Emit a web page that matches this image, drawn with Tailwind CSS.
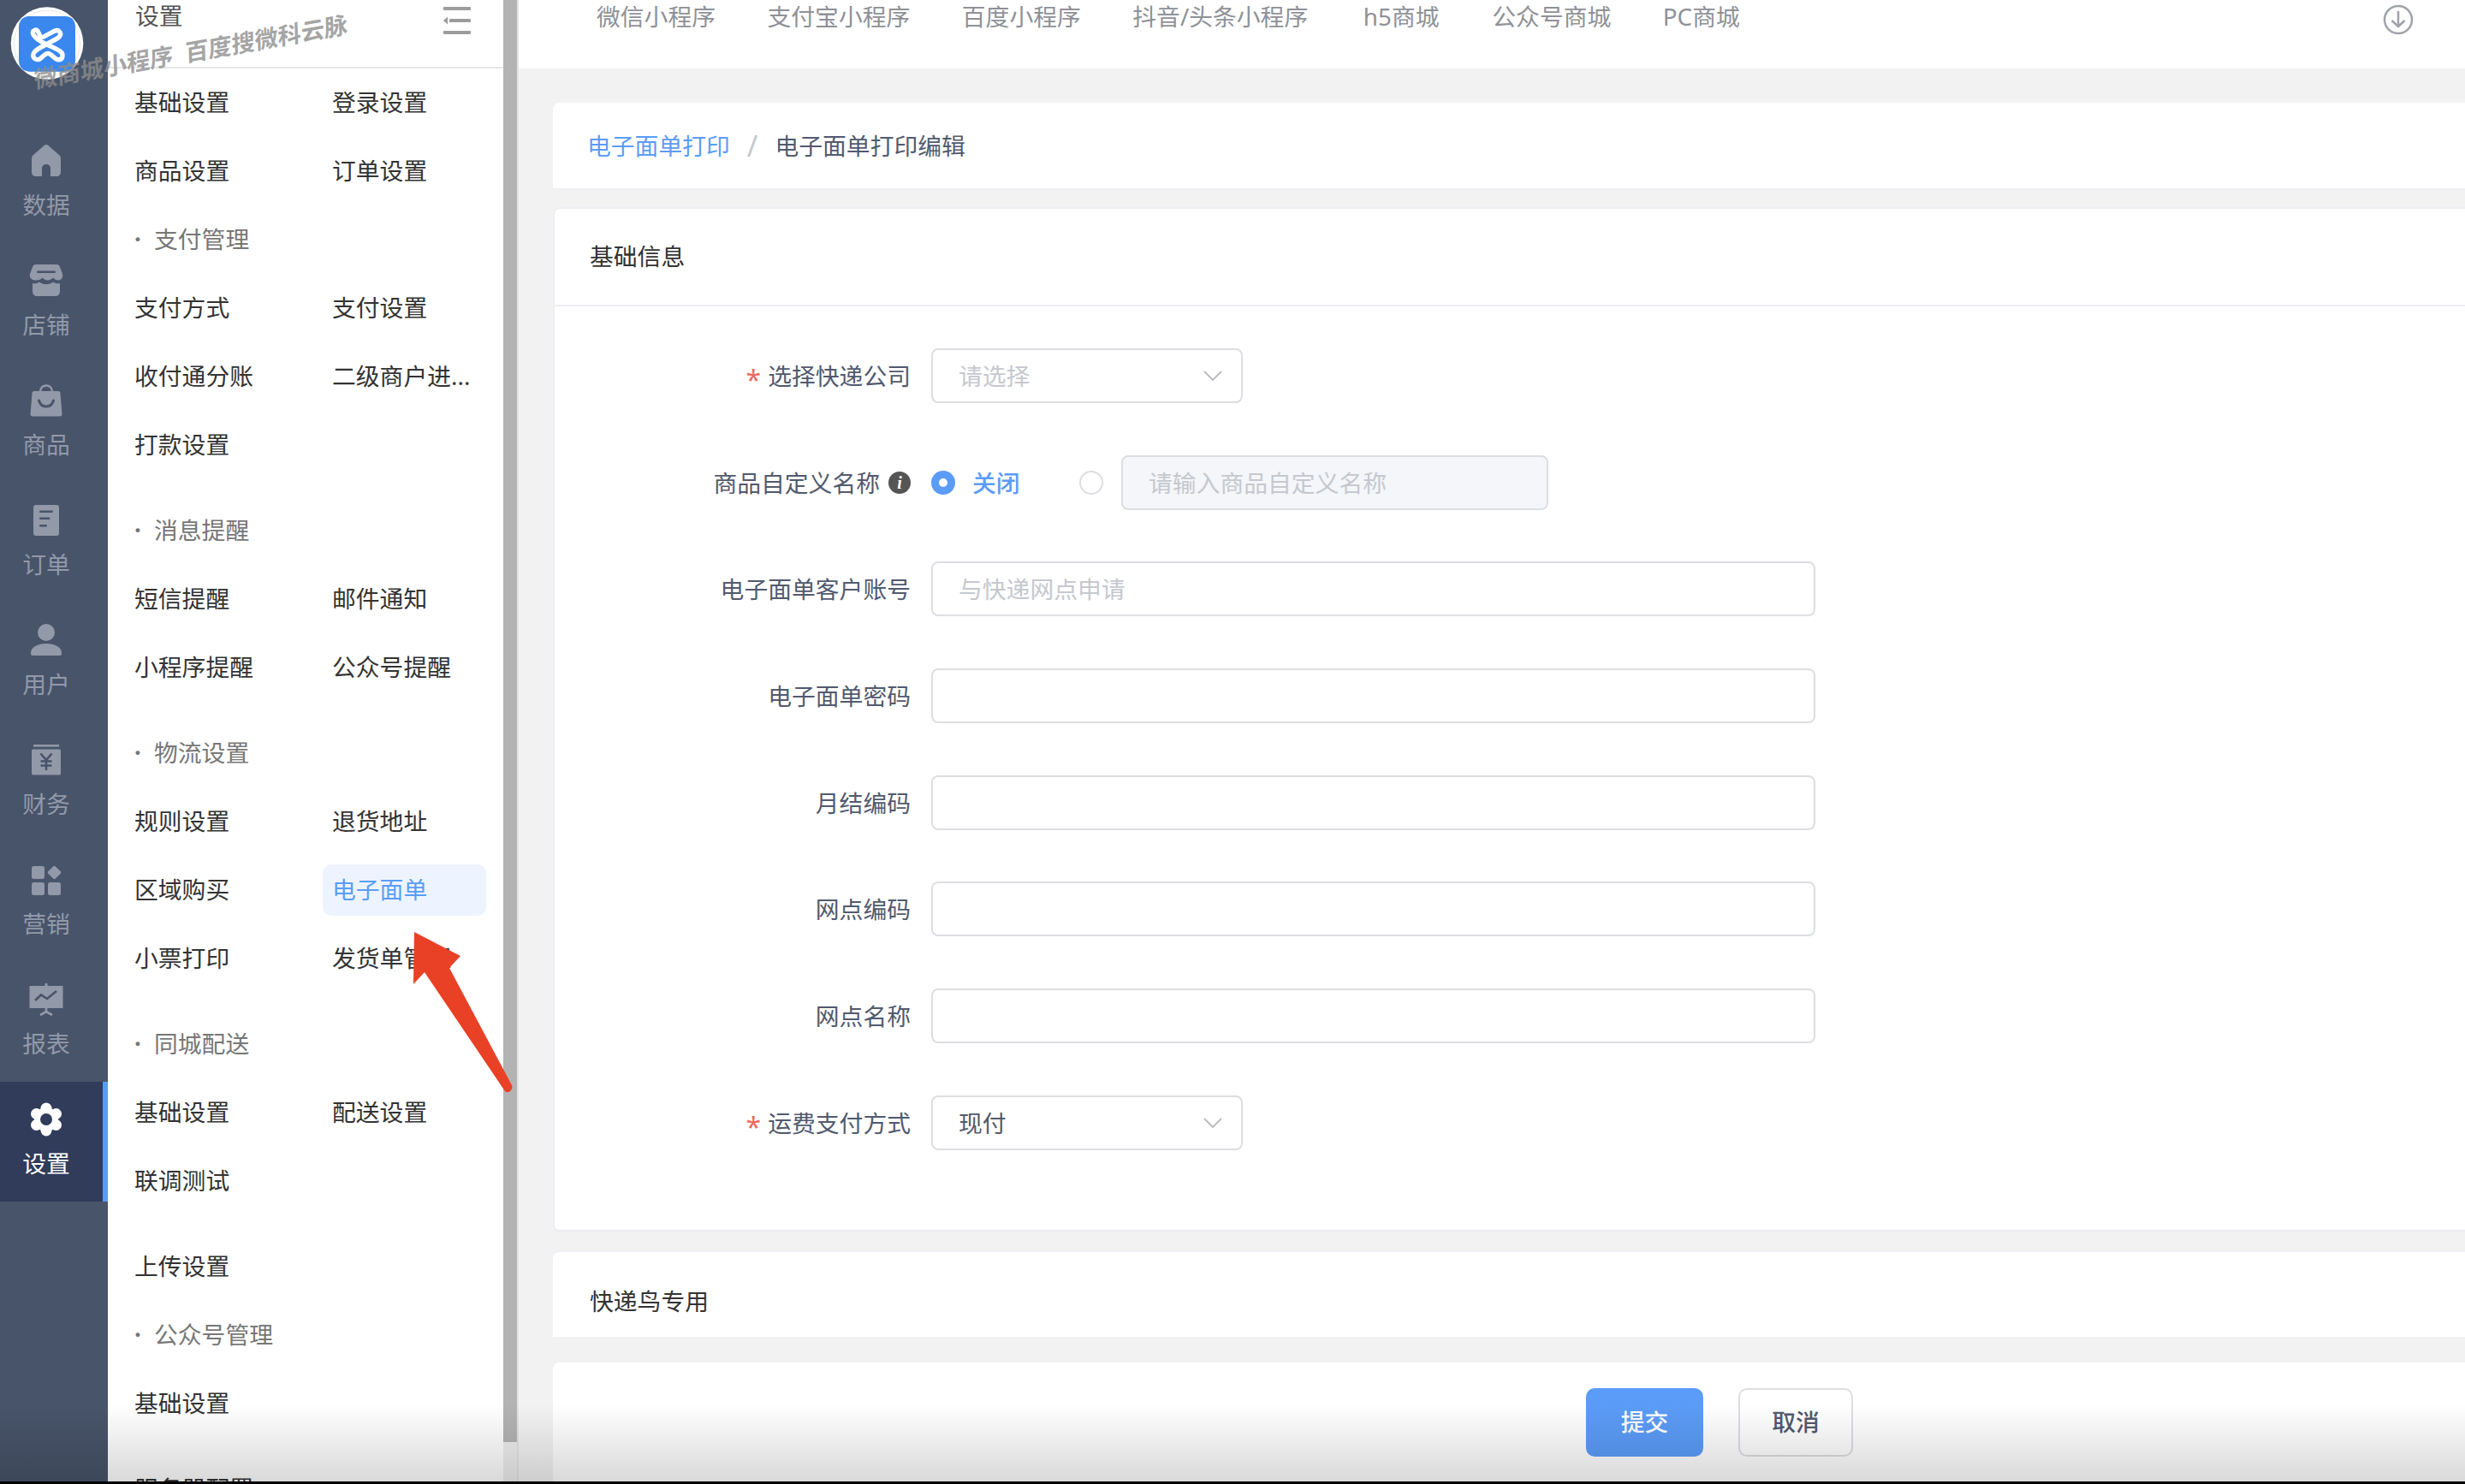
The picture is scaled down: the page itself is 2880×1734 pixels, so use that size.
<!DOCTYPE html>
<html lang="zh-CN">

<head>
    <meta charset="UTF-8">
    <meta name="viewport" content="width=device-width, initial-scale=1.0">
    <script src="https://cdn.jsdelivr.net/npm/@tailwindcss/browser@4"></script>
    <title>电子面单打印编辑</title>
</head>

<body class="font-['Noto_Sans','Noto_Sans_CJK_SC',sans-serif] text-[27.8px] leading-[34px]">
    <div class="relative flex w-[2880px] h-[1734px] overflow-hidden bg-[#f2f2f3]">

        <!-- 左侧主导航 -->
        <nav class="w-[126px] shrink-0 bg-[#48546a] text-[#9299a8]">
            <div class="h-[144px] pl-[10px] pt-[5px]">
                <svg class="w-[90px] h-[90px]" viewBox="0 0 270 270">
                    <circle cx="135" cy="137" r="127" fill="#fff" />
                    <circle cx="135" cy="137" r="116" fill="none" stroke="#d6d9de" stroke-width="2" />
                    <path d="M72 42H198C222 42 234 58 234 80V196C234 220 220 236 196 236H74C50 236 36 220 36 196V80C36 58 50 42 72 42Z" fill="#3a87ee" />
                    <path d="M86 95C96 84 104 92 108 106C112 120 122 116 134 108L160 94C176 86 188 100 178 114C170 122 150 130 126 144C110 152 98 158 90 168C78 184 96 202 112 190C122 182 128 172 138 172C150 172 158 190 172 194C190 196 196 176 180 164C160 150 112 136 96 118C88 108 82 102 86 95Z" fill="none" stroke="#fff" stroke-width="16" stroke-linejoin="round" />
                </svg>
            </div>

            <a class="block h-[140px] w-[108px] pt-[24px] text-center">
                <svg class="mx-auto w-10 h-10" viewBox="0 0 40 40" fill="currentColor"><path d="M20 1C21.200 1 22.200 1.600 23 2.400L35 13C36.500 14.400 37 15.500 37 17.500V33C37 36 35 38 32 38H25V29C25 26 23 24 20 24S15 26 15 29V38H8C5 38 3 36 3 33V17.500C3 15.500 3.500 14.400 5 13L17 2.400C17.800 1.600 18.800 1 20 1Z" /></svg>
                <div class="mt-[14px]">数据</div>
            </a>
            <a class="block h-[140px] w-[108px] pt-[24px] text-center">
                <svg class="mx-auto w-10 h-10" viewBox="0 0 40 40" fill="currentColor"><path d="M8 1H32C34 1 35.500 2 36 4L39 12C40 16 37.500 19.500 34 19.500C31.500 19.500 30 18.500 28 16.500C26 18.500 24 19.500 21.500 19.500C19.500 19.500 17.500 18.500 15.500 16.500C13.500 18.500 11 20 7.500 19.500C3 19.500 0 16 1 12L4 4C4.500 2 6 1 8 1Z" /><path d="M4 23C6 23.500 9 23.500 12 21.500C14 23.500 17.500 24 20 24S26 23.500 28 21.500C31 23.500 34 23.500 36 23V32C36 36 34 38 30 38H10C6 38 4 36 4 32Z" /><rect x="9" y="8.500" width="22" height="2.600" rx="1.300" fill="#48546a" /></svg>
                <div class="mt-[14px]">店铺</div>
            </a>
            <a class="block h-[140px] w-[108px] pt-[24px] text-center">
                <svg class="mx-auto w-10 h-10" viewBox="0 0 40 40" fill="currentColor"><path d="M13 10C13 5 16 2.500 20 2.500S27 5 27 10" fill="none" stroke="currentColor" stroke-width="2.400" /><path d="M6 9H34C35.500 9 36.500 10 36.500 11.500L38.500 36C38.500 37.500 37.500 38.500 36 38.500H4C2.500 38.500 1.500 37.500 1.500 36L3.500 11.500C3.500 10 4.500 9 6 9Z" /><path d="M11.500 20C13 25 16.500 27 20 27S27 25 28.500 20" fill="none" stroke="#48546a" stroke-width="3" stroke-linecap="round" /></svg>
                <div class="mt-[14px]">商品</div>
            </a>
            <a class="block h-[140px] w-[108px] pt-[24px] text-center">
                <svg class="mx-auto w-10 h-10" viewBox="0 0 40 40" fill="currentColor"><rect x="5" y="2" width="30" height="36" rx="3" /><rect x="12" y="8.500" width="16" height="2.600" rx="1.300" fill="#48546a" /><rect x="12" y="16.500" width="12.500" height="2.600" rx="1.300" fill="#48546a" /><rect x="12" y="25" width="9" height="2.600" rx="1.300" fill="#48546a" /></svg>
                <div class="mt-[14px]">订单</div>
            </a>
            <a class="block h-[140px] w-[108px] pt-[24px] text-center">
                <svg class="mx-auto w-10 h-10" viewBox="0 0 40 40" fill="currentColor"><circle cx="20" cy="11" r="10" /><path d="M4 38C2.500 38 2 37 2 35C2 28 10 24 20 24S38 28 38 35C38 37 37.500 38 36 38Z" /></svg>
                <div class="mt-[14px]">用户</div>
            </a>
            <a class="block h-[140px] w-[108px] pt-[24px] text-center">
                <svg class="mx-auto w-10 h-10" viewBox="0 0 40 40" fill="currentColor"><rect x="5" y="2" width="30" height="2.600" /><rect x="3" y="7.500" width="34" height="30" rx="1.500" /><path d="M13.500 12.500L20 20L26.500 12.500M20 20V32M13.500 21.500H26.500M13.500 26.500H26.500" fill="none" stroke="#48546a" stroke-width="2.600" /></svg>
                <div class="mt-[14px]">财务</div>
            </a>
            <a class="block h-[140px] w-[108px] pt-[24px] text-center">
                <svg class="mx-auto w-10 h-10" viewBox="0 0 40 40" fill="currentColor"><rect x="3" y="4" width="15" height="15" rx="2.500" /><rect x="3" y="23" width="15" height="15" rx="2.500" /><rect x="22" y="23" width="15" height="15" rx="2.500" /><rect x="23.500" y="5.500" width="12" height="12" rx="2" transform="rotate(45 29.500 11.500)" /></svg>
                <div class="mt-[14px]">营销</div>
            </a>
            <a class="block h-[140px] w-[108px] pt-[24px] text-center">
                <svg class="mx-auto w-10 h-10" viewBox="0 0 40 40" fill="currentColor"><rect x="18.500" y="1" width="3" height="4" /><rect x="0.500" y="4" width="39" height="26" /><path d="M7 21L14 14.500L21 19L32 10" fill="none" stroke="#48546a" stroke-width="2.600" /><path d="M20 30V33M13 38L20 34L27 38" fill="none" stroke="currentColor" stroke-width="2.600" /></svg>
                <div class="mt-[14px]">报表</div>
            </a>
            <a class="flex h-[140px] bg-[#303c5a] text-white">
                <div class="w-[108px] pt-[24px] text-center">
                    <svg class="mx-auto w-10 h-10" viewBox="0 0 40 40" fill="currentColor"><circle cx="20" cy="20" r="14" /><circle cx="20" cy="7" r="6.500" /><circle cx="20" cy="33" r="6.500" /><circle cx="8.500" cy="13.500" r="6.500" /><circle cx="31.500" cy="13.500" r="6.500" /><circle cx="8.500" cy="26.500" r="6.500" /><circle cx="31.500" cy="26.500" r="6.500" /><circle cx="20" cy="20" r="7" fill="#303c5a" /></svg>
                    <div class="mt-[14px]">设置</div>
                </div>
                <div class="ml-auto w-[6px] bg-[#5b9cf8]"></div>
            </a>
        </nav>

        <!-- 二级菜单 -->
        <aside class="w-[462px] shrink-0 bg-white overflow-hidden text-[#333]">
            <div class="flex justify-between h-[80px] border-b-2 border-[#e6e6e6] pl-[32px] pr-[38px] text-[#555]">
                <span class="mt-[1px]">设置</span>
                <svg class="w-[32px] h-[32px] mt-[8px]" viewBox="0 0 32 32" fill="#9c9c9c">
                    <rect x="0" y="0" width="32" height="4" rx="1" />
                    <rect x="7" y="14" width="25" height="4" rx="1" />
                    <rect x="0" y="28" width="32" height="4" rx="1" />
                    <path d="M5 11.500V20.500L0 16Z" />
                </svg>
            </div>

            <div class="grid grid-cols-[231px_231px] pl-[20px]">
                <a class="h-[60px] my-[10px] w-[191px] px-[11px] leading-[58px]">基础设置</a>
                <a class="h-[60px] my-[10px] w-[191px] px-[11px] leading-[58px]">登录设置</a>
                <a class="h-[60px] my-[10px] w-[191px] px-[11px] leading-[58px]">商品设置</a>
                <a class="h-[60px] my-[10px] w-[191px] px-[11px] leading-[58px]">订单设置</a>
            </div>

            <div class="flex h-[78px] mb-[2px] items-center pl-[31px] text-[#777]"><span class="w-[23px] font-bold">·</span>支付管理</div>
            <div class="grid grid-cols-[231px_231px] pl-[20px]">
                <a class="h-[60px] my-[10px] w-[191px] px-[11px] leading-[58px]">支付方式</a>
                <a class="h-[60px] my-[10px] w-[191px] px-[11px] leading-[58px]">支付设置</a>
                <a class="h-[60px] my-[10px] w-[191px] px-[11px] leading-[58px]">收付通分账</a>
                <a class="h-[60px] my-[10px] w-[191px] px-[11px] leading-[58px] whitespace-nowrap">二级商户进...</a>
                <a class="h-[60px] my-[10px] w-[191px] px-[11px] leading-[58px]">打款设置</a>
            </div>

            <div class="flex h-[78px] mt-[20px] mb-[2px] items-center pl-[31px] text-[#777]"><span class="w-[23px] font-bold">·</span>消息提醒</div>
            <div class="grid grid-cols-[231px_231px] pl-[20px]">
                <a class="h-[60px] my-[10px] w-[191px] px-[11px] leading-[58px]">短信提醒</a>
                <a class="h-[60px] my-[10px] w-[191px] px-[11px] leading-[58px]">邮件通知</a>
                <a class="h-[60px] my-[10px] w-[191px] px-[11px] leading-[58px]">小程序提醒</a>
                <a class="h-[60px] my-[10px] w-[191px] px-[11px] leading-[58px]">公众号提醒</a>
            </div>

            <div class="flex h-[78px] mt-[20px] mb-[2px] items-center pl-[31px] text-[#777]"><span class="w-[23px] font-bold">·</span>物流设置</div>
            <div class="grid grid-cols-[231px_231px] pl-[20px]">
                <a class="h-[60px] my-[10px] w-[191px] px-[11px] leading-[58px]">规则设置</a>
                <a class="h-[60px] my-[10px] w-[191px] px-[11px] leading-[58px]">退货地址</a>
                <a class="h-[60px] my-[10px] w-[191px] px-[11px] leading-[58px]">区域购买</a>
                <a class="h-[60px] my-[10px] w-[191px] px-[11px] leading-[58px] rounded-[10px] bg-[#edf4ff] text-[#5b9cf8]">电子面单</a>
                <a class="h-[60px] my-[10px] w-[191px] px-[11px] leading-[58px]">小票打印</a>
                <a class="h-[60px] my-[10px] w-[191px] px-[11px] leading-[58px]">发货单管理</a>
            </div>

            <div class="flex h-[78px] mt-[20px] mb-[2px] items-center pl-[31px] text-[#777]"><span class="w-[23px] font-bold">·</span>同城配送</div>
            <div class="grid grid-cols-[231px_231px] pl-[20px]">
                <a class="h-[60px] my-[10px] w-[191px] px-[11px] leading-[58px]">基础设置</a>
                <a class="h-[60px] my-[10px] w-[191px] px-[11px] leading-[58px]">配送设置</a>
                <a class="h-[60px] my-[10px] w-[191px] px-[11px] leading-[58px]">联调测试</a>
            </div>

            <div class="grid grid-cols-[231px_231px] pl-[20px] mt-[20px]">
                <a class="h-[60px] my-[10px] w-[191px] px-[11px] leading-[58px]">上传设置</a>
            </div>

            <div class="flex h-[78px] mb-[2px] items-center pl-[31px] text-[#777]"><span class="w-[23px] font-bold">·</span>公众号管理</div>
            <div class="grid grid-cols-[231px_231px] pl-[20px]">
                <a class="h-[60px] my-[10px] w-[191px] px-[11px] leading-[58px]">基础设置</a>
            </div>

            <div class="grid grid-cols-[231px_231px] pl-[20px] mt-[20px]">
                <a class="h-[60px] my-[10px] w-[191px] px-[11px] leading-[58px]">服务器配置</a>
            </div>
        </aside>

        <!-- 滚动条 -->
        <div class="flex flex-col w-[16px] shrink-0 bg-[#eeeeee]">
            <div class="h-[1685px] bg-[#b3b3b3]"></div>
        </div>
        <div class="w-[2px] shrink-0 bg-[#e4e4e4]"></div>

        <!-- 主内容 -->
        <main class="flex-1 min-w-0">
            <div class="flex h-[80px] bg-white pl-[91px] pr-[60px] text-[#8f9197]">
                <div class="flex gap-[60.500px] h-[38px] items-center whitespace-nowrap">
                    <a>微信小程序</a>
                    <a>支付宝小程序</a>
                    <a>百度小程序</a>
                    <a class="w-[209px]">抖音/头条小程序</a>
                    <a class="w-[90px]">h5商城</a>
                    <a>公众号商城</a>
                    <a>PC商城</a>
                </div>
                <svg class="ml-auto mt-[5px] w-[36px] h-[36px]" viewBox="0 0 36 36" fill="none" stroke="#a0a2aa" stroke-width="2.500">
                    <circle cx="18" cy="18" r="16" />
                    <path d="M18 8V26M10.500 19L18 26L25.500 19" />
                </svg>
            </div>

            <div class="flex items-center h-[102px] ml-[40px] mt-[40px] pl-[40px] bg-white border-b-2 border-[#eeeef4] rounded-tl-lg">
                <a class="text-[#5b9cf8]">电子面单打印</a>
                <span class="mx-[20px] text-[34px] text-[#c5c8ce]">/</span>
                <span class="text-[#515a6e]">电子面单打印编辑</span>
            </div>

            <section class="h-[1197px] ml-[40px] mt-[20px] bg-white border-2 border-r-0 border-[#eeeef4] rounded-l-lg">
                <div class="h-[114px] pl-[41px] pt-[38px] border-b-2 border-[#eeeef4] text-[#333]">基础信息</div>

                <form class="pt-[49px] text-[#515a6e]">
                    <div class="flex items-center h-[64px] mb-[60.700px]">
                        <label class="w-[416px] mr-[24px] text-right"><span class="text-[32px] leading-[0] align-[-6px] text-[#ee6a5e] mr-[8px]">*</span>选择快递公司</label>
                        <div class="flex items-center justify-between w-[364px] h-[64px] pl-[30px] pr-[22px] border-2 border-[#dcdee2] rounded-lg text-[#c5c8ce]">
                            请选择
                            <svg class="w-[22px] h-[12px]" viewBox="0 0 22 12" fill="none" stroke="#b8bac0" stroke-width="1.800"><path d="M1 1L11 11L21 1" /></svg>
                        </div>
                    </div>

                    <div class="flex items-center h-[64px] mb-[60.700px]">
                        <label class="flex items-center justify-end w-[416px] mr-[24px]">
                            商品自定义名称
                            <span class="flex items-center justify-center w-[26px] h-[26px] ml-[10px] rounded-full bg-[#555] text-white text-[20px] italic font-bold font-['Liberation_Serif',serif]">i</span>
                        </label>
                        <span class="flex items-center justify-center w-[28px] h-[28px] rounded-full bg-[#5b9cf8]"><span class="w-[10px] h-[10px] rounded-full bg-white"></span></span>
                        <span class="ml-[20px] w-[125px] text-[#5b9cf8] font-medium">关闭</span>
                        <span class="w-[28px] h-[28px] rounded-full border-2 border-[#dcdee2]"></span>
                        <input type="text" disabled placeholder="请输入商品自定义名称" class="w-[499px] h-[64px] ml-[21px] px-[30px] border-2 border-[#dcdee2] rounded-lg bg-[#f4f6f9] placeholder:text-[#c5c8ce]">
                    </div>

                    <div class="flex items-center h-[64px] mb-[60.700px]">
                        <label class="w-[416px] mr-[24px] text-right">电子面单客户账号</label>
                        <input type="text" placeholder="与快递网点申请" class="w-[1033px] h-[64px] px-[30px] border-2 border-[#dcdee2] rounded-lg placeholder:text-[#c5c8ce]">
                    </div>

                    <div class="flex items-center h-[64px] mb-[60.700px]">
                        <label class="w-[416px] mr-[24px] text-right">电子面单密码</label>
                        <input type="password" class="w-[1033px] h-[64px] px-[30px] border-2 border-[#dcdee2] rounded-lg">
                    </div>

                    <div class="flex items-center h-[64px] mb-[60.700px]">
                        <label class="w-[416px] mr-[24px] text-right">月结编码</label>
                        <input type="text" class="w-[1033px] h-[64px] px-[30px] border-2 border-[#dcdee2] rounded-lg">
                    </div>

                    <div class="flex items-center h-[64px] mb-[60.700px]">
                        <label class="w-[416px] mr-[24px] text-right">网点编码</label>
                        <input type="text" class="w-[1033px] h-[64px] px-[30px] border-2 border-[#dcdee2] rounded-lg">
                    </div>

                    <div class="flex items-center h-[64px] mb-[60.700px]">
                        <label class="w-[416px] mr-[24px] text-right">网点名称</label>
                        <input type="text" class="w-[1033px] h-[64px] px-[30px] border-2 border-[#dcdee2] rounded-lg">
                    </div>

                    <div class="flex items-center h-[64px]">
                        <label class="w-[416px] mr-[24px] text-right"><span class="text-[32px] leading-[0] align-[-6px] text-[#ee6a5e] mr-[8px]">*</span>运费支付方式</label>
                        <div class="flex items-center justify-between w-[364px] h-[64px] pl-[30px] pr-[22px] border-2 border-[#dcdee2] rounded-lg">
                            现付
                            <svg class="w-[22px] h-[12px]" viewBox="0 0 22 12" fill="none" stroke="#b8bac0" stroke-width="1.800"><path d="M1 1L11 11L21 1" /></svg>
                        </div>
                    </div>
                </form>
            </section>

            <section class="h-[101px] ml-[40px] mt-[22px] pl-[43px] pt-[40px] bg-white border-t-2 border-[#eeeef4] rounded-tl-lg text-[#333]">快递鸟专用</section>

            <div class="flex gap-[41px] h-[160px] ml-[40px] mt-[30px] pl-[1207px] pt-[30px] bg-white rounded-tl-lg">
                <button class="w-[137px] h-[80px] pb-[3px] rounded-[10px] bg-[#5b9cf8] text-white font-medium">提交</button>
                <button class="w-[134px] h-[80px] pb-[3px] rounded-[10px] border-2 border-[#dcdee2] text-[#515a6e] font-medium">取消</button>
            </div>
        </main>

        <!-- 截图上的水印和箭头 -->
        <div class="absolute left-[37px] top-[46px] whitespace-pre font-bold text-[27.500px] leading-[30px] text-[#8d8d8d]/80 -rotate-[10deg] -skew-x-[8deg] pointer-events-none">微商城小程序  百度搜微科云脉</div>
        <svg class="absolute left-[470px] top-[1080px] w-[140px] h-[210px] pointer-events-none" viewBox="470 1080 140 210">
            <path d="M484 1089L538 1117L525 1131L598 1268C600 1273 594 1279 590 1275L496 1136L483 1150Z" fill="#e94126" />
        </svg>

        <!-- 底部阴影 -->
        <div class="absolute left-0 right-0 bottom-0 pointer-events-none">
            <div class="h-[90px] bg-linear-to-b from-transparent to-black/15"></div>
            <div class="h-[3px] bg-black"></div>
        </div>
    </div>
</body>

</html>
